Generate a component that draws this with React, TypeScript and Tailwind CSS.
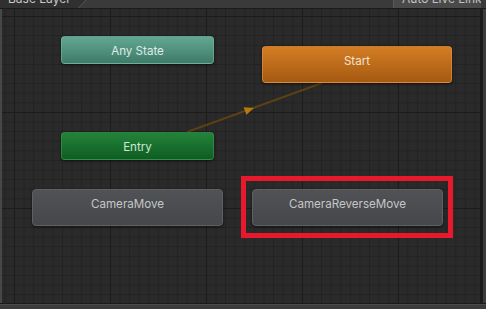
import React from "react";

type NodeProps = {
  label: string;
  className: string;
  textClass: string;
};

function StateNode({ label, className, textClass }: NodeProps) {
  return (
    <div
      className={`absolute rounded-[4px] shadow-[0_1px_3px_rgba(0,0,0,0.55)] flex justify-center ${className}`}
    >
      <span className={`text-[11.6px] leading-[28px] ${textClass}`}>{label}</span>
    </div>
  );
}

export default function App() {
  return (
    <div
      className="w-[486px] h-[309px] overflow-hidden flex flex-col bg-[#2a2a2a]"
      style={{ fontFamily: "Inter, 'Noto Sans', sans-serif" }}
    >
      {/* top bar */}
      <div className="h-[8px] flex overflow-hidden bg-[#3a3a3a] shrink-0">
        <div className="w-[78px] bg-[#303030] pl-[8px] overflow-hidden">
          <div className="text-[12px] leading-[12px] mt-[-7px] text-[#c9c9c9] whitespace-nowrap">Base Layer</div>
        </div>
        <svg width="10" height="8" viewBox="0 0 10 8" className="shrink-0">
          <polygon points="0,0 8,0 0,8" fill="#303030" />
          <line x1="8.5" y1="-0.5" x2="0" y2="8.5" stroke="#555" strokeWidth="1" />
        </svg>
        <div className="flex-1" />
        <div className="w-[88px] bg-[#4a4a4a] border-l border-[#5a5a5a] pl-[8px] overflow-hidden">
          <div className="text-[12px] leading-[12px] mt-[-7px] text-[#c2c2c2] whitespace-nowrap">Auto Live Link</div>
        </div>
        <div className="w-[5px]" />
      </div>
      <div className="h-px bg-[#1a1a1a] shrink-0" />

      {/* middle */}
      <div className="flex-1 flex min-h-0">
        <div className="w-[2px] bg-[#474747] shrink-0" />
        <div className="flex-1 relative overflow-hidden bg-[#2a2a2a] bg-[linear-gradient(to_right,#1c1c1c_1px,transparent_1px),linear-gradient(to_bottom,#1c1c1c_1px,transparent_1px),linear-gradient(to_right,#232323_1px,transparent_1px),linear-gradient(to_bottom,#232323_1px,transparent_1px)] bg-[size:96px_96px,96px_96px,9.6px_9.6px,9.6px_9.6px] bg-[position:12px_7px,12px_7px,12px_7px,12px_7px]">
          <svg className="absolute left-0 top-0" width="478" height="294" viewBox="0 0 478 294">
            <line x1="185" y1="123" x2="320" y2="74" stroke="#5a4114" strokeWidth="2" />
            <polygon points="252,99 241.6,98.2 244.4,105.8" fill="#b47a12" />
          </svg>

          <StateNode
            label="Any State"
            className="left-[59px] top-[27px] w-[153px] h-[28px] bg-[linear-gradient(to_bottom,#62a791,#3f7b69)] border border-[#74b6a0]/60"
            textClass="text-[#dfece7]"
          />
          <StateNode
            label="Start"
            className="left-[260px] top-[37px] w-[190px] h-[37px] bg-[linear-gradient(to_bottom,#d47d24,#a55a11)] border border-[#e0944a]/60"
            textClass="text-[#f3e3d0]"
          />
          <StateNode
            label="Entry"
            className="left-[59px] top-[123px] w-[153px] h-[28px] bg-[linear-gradient(to_bottom,#23833a,#0f5c22)] border border-[#3c9a52]/60"
            textClass="text-[#d2e6d4]"
          />
          <StateNode
            label="CameraMove"
            className="left-[30px] top-[180px] w-[191px] h-[37px] bg-[linear-gradient(to_bottom,#505256,#45474b)] border border-[#5e6064]"
            textClass="text-[#c6c6c6]"
          />
          <StateNode
            label="CameraReverseMove"
            className="left-[250px] top-[180px] w-[191px] h-[37px] bg-[linear-gradient(to_bottom,#505256,#45474b)] border border-[#5e6064]"
            textClass="text-[#c6c6c6]"
          />
          <div className="absolute left-[239px] top-[167px] w-[212px] h-[62px] border-[5px] border-[#e8192c]" />
        </div>
        <div className="w-[3px] bg-[#1c1c1c] shrink-0" />
        <div className="w-[3px] bg-[#3c3c3c] shrink-0" />
      </div>

      {/* bottom */}
      <div className="h-px bg-[#1a1a1a] shrink-0" />
      <div className="h-[5px] bg-[#3c3c3c] border-t border-[#4a4a4a] shrink-0" />
    </div>
  );
}
